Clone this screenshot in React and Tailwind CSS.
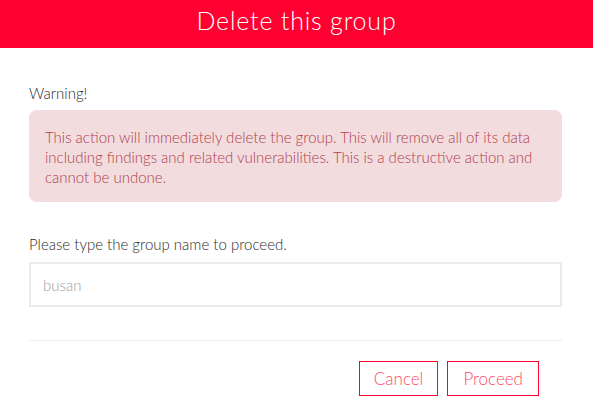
import React from 'react';

export default function App() {
  return (
    <div className="w-[593px] h-[417px] bg-white overflow-hidden" style={{ fontFamily: 'Lato, "Liberation Sans", sans-serif' }}>
      {/* Header */}
      <header className="h-[48px] bg-[#ff0030] flex items-center justify-center">
        <h1 className="text-white text-[25px] font-light tracking-[0.8px] leading-none -mt-[8px]">Delete this group</h1>
      </header>

      <div className="pl-[29px] pr-[31px] pt-[35px]">
        <p className="text-[15px] font-light text-[#2b2b2b] leading-[20px]">Warning!</p>

        <div className="mt-[7px] rounded-[8px] bg-[#f2dcde] pl-[16px] pr-[14px] pt-[17px] pb-[15px]">
          <p className="text-[15px] font-light text-[#b0404e] leading-[20px]">
            This action will immediately delete the group. This will remove all of its data including findings and related vulnerabilities. This is a destructive action and cannot be undone.
          </p>
        </div>

        <p className="mt-[32px] text-[15px] font-light text-[#2b2b2b] leading-[20px]">Please type the group name to proceed.</p>

        <input
          type="text"
          placeholder="busan"
          className="mt-[8px] w-full h-[45px] border-2 border-[#ebebeb] px-[12px] text-[15px] font-light text-[#333] placeholder:text-[#a0a0a0] outline-none"
        />

        <div className="mt-[33px] border-t border-[#ececec]" />

        <div className="flex justify-end gap-[9px] pt-[20px] pr-[23px]">
          <button className="h-[35px] px-[14px] border border-[#ff0030] text-[#ff4a68] text-[17px] font-light">Cancel</button>
          <button className="h-[35px] px-[15px] border border-[#ff0030] text-[#ff4a68] text-[17px] font-light">Proceed</button>
        </div>
      </div>
    </div>
  );
}
